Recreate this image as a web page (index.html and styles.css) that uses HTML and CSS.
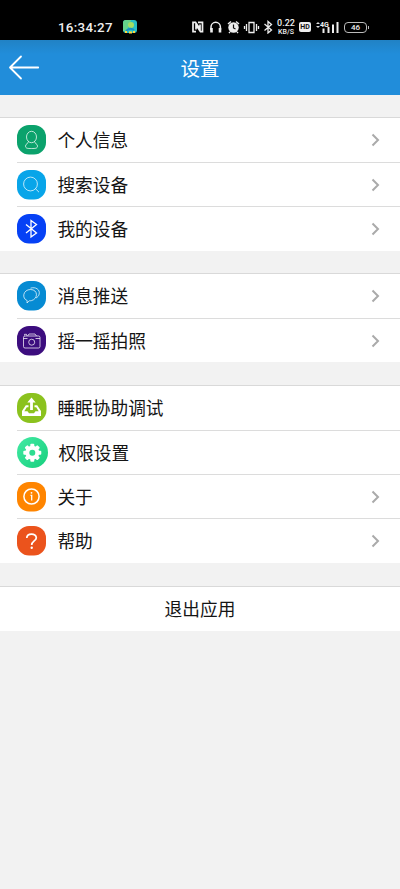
FILE: index.html
```html
<!DOCTYPE html>
<html lang="zh-CN">
<head>
<meta charset="utf-8">
<title>设置</title>
<link rel="stylesheet" href="styles.css">
</head>
<body>
<div class="status">
  <span class="time">16:34:27</span>
  <svg class="app" width="14" height="14" viewBox="0 0 14 14"><rect width="14" height="13" rx="3" fill="#27bfc4"/><path d="M0 3a3 3 0 0 1 3-3h5L6 6l-3 5H0z" fill="#65d58a"/><circle cx="8" cy="5" r="3" fill="#a4df62"/><path d="M3 11q4-4 8-1" stroke="#168fc3" stroke-width="2" fill="none"/><path d="M2 12h2m2 .5h3m1-.5h2" stroke="#ffd83b" stroke-width="2"/></svg>
  <svg class="indicators" width="83" height="14" viewBox="0 0 83 14" fill="none" stroke="#eee" stroke-width="1.5">
    <path d="M4 11.700H1V2.300h2.500L8 9V4.500M6 2.300h4.500v9.400H8.500L4 5v4.500" stroke-width="1.700"/>
    <path d="M19 10V7a4.700 4.700 0 0 1 9.400 0v3"/><path d="M19.500 8v4.500M28 8v4.500" stroke-width="2.600"/>
    <circle cx="41.500" cy="7.500" r="5.200" fill="#eee" stroke="none"/><path d="M36 4l3-2.500M47 4l-3-2.500M38 12l-1 1M45 12l1 1"/><path d="M41.500 4.500v3.500l2 1" stroke="#111" stroke-width="1.200"/>
    <path d="M57 2.500h5v10h-5zM54.500 4v7M64.500 4v7M52.500 6v3M66.500 6v3" stroke-width="1.300"/>
    <path d="M72.500 4l7 6-3.500 3V1.500l3.500 3-7 6" stroke-width="1.300"/>
  </svg>
  <span class="speed"><b>0.22</b><small>KB/S</small></span>
  <span class="hd">HD</span>
  <svg class="signal" width="24" height="14" viewBox="0 0 24 14"><path d="M0 4l2-2 2 2M0 6l2 2 2-2" fill="#ddd"/><text x="4" y="6.500" class="network">4G</text><path d="M7.500 13V8.500M12.500 13V7M17 13V4.500M21.500 13V2" stroke="#eee" stroke-width="2"/></svg>
  <span class="battery">46</span>
</div>
<header class="header">
  <svg width="32" height="26" viewBox="0 0 32 26" fill="none" stroke="#fff" stroke-width="1.800" stroke-linecap="round" stroke-linejoin="round"><path d="M13 1.500L2 12.500l11 11M2.500 12.500h27.700"/></svg>
  <h1>设置</h1><span></span>
</header>
<main>
  <section class="group">
    <div class="row"><svg class="icon" viewBox="0 0 30 30"><rect class="tile green" width="29" height="29.500" rx="12"/><g class="line"><ellipse cx="14.500" cy="12" rx="5" ry="5.700"/><path d="M11.500 16.500c0 2-3 2.200-3 4.500 0 2.500 2 2.500 6 2.500s6 0 6-2.500c0-2.300-3-2.500-3-4.500"/></g></svg><span class="label">个人信息</span><svg class="chevron" viewBox="0 0 9 14"><path d="M1.500 1.500L7 7l-5.500 5.500"/></svg></div>
    <div class="row"><svg class="icon" viewBox="0 0 30 30"><rect class="tile sky" width="29" height="29.500" rx="12"/><g class="line"><circle cx="13.500" cy="14" r="6.900"/><path d="M18.300 18.500l3.700 3.700"/></g></svg><span class="label">搜索设备</span><svg class="chevron" viewBox="0 0 9 14"><path d="M1.500 1.500L7 7l-5.500 5.500"/></svg></div>
    <div class="row"><svg class="icon" viewBox="0 0 30 30"><rect class="tile blue" width="29" height="29.500" rx="12"/><path class="bluetooth" d="M9 10.500l10.500 8.500-5.500 4V6.500l5.500 4L9 19"/></svg><span class="label">我的设备</span><svg class="chevron" viewBox="0 0 9 14"><path d="M1.500 1.500L7 7l-5.500 5.500"/></svg></div>
  </section>
  <section class="group">
    <div class="row"><svg class="icon" viewBox="0 0 30 30"><rect class="tile azure" width="29" height="29.500" rx="12"/><g class="line"><path d="M10 22l.2-2.400C4.500 17.500 6 8.500 13.500 8.500c8 0 7.500 9.500 1 11.100-.8.200-1.500.2-2.200.2z"/><path d="M13.500 7.200c5-1.700 9.700 1.300 8.700 5.800-.4 1.800-1.600 3.200-3.200 4"/></g></svg><span class="label">消息推送</span><svg class="chevron" viewBox="0 0 9 14"><path d="M1.500 1.500L7 7l-5.500 5.500"/></svg></div>
    <div class="row"><svg class="icon" viewBox="0 0 30 30"><rect class="tile purple" width="29" height="29.500" rx="12"/><g class="line"><rect x="6.500" y="10" width="16.500" height="12" rx="1.500"/><path d="M10.500 10l1.500-2h6l1.500 2M7.500 9.500V8.300h2v1.200M6.500 12.500h4M18.500 12.500H23"/><circle cx="14.700" cy="16.200" r="3"/></g></svg><span class="label">摇一摇拍照</span><svg class="chevron" viewBox="0 0 9 14"><path d="M1.500 1.500L7 7l-5.500 5.500"/></svg></div>
  </section>
  <section class="group last">
    <div class="row"><svg class="icon" viewBox="0 0 30 30"><rect class="tile lime" width="29.500" height="30" rx="13"/><path d="M14.500 4.500L10.300 9.500h2.800v7.500h2.800V9.500h2.800z" fill="#fff"/><path d="M11.500 12.200H8.800L5 18v5h19v-5l-3.800-5.800h-2.700v2h1.700l2.500 4h-3.200L17 20.300h-5l-1.500-2.100H7.300l2.500-4h1.700z" fill="#fff"/></svg><span class="label">睡眠协助调试</span></div>
    <div class="row permission"><svg class="icon" viewBox="0 0 31 31"><defs><linearGradient id="mint" x2="1" y2="1"><stop stop-color="#43eaa4"/><stop offset="1" stop-color="#16cf7d"/></linearGradient></defs><circle cx="15.500" cy="15.500" r="15.500" fill="url(#mint)"/><g transform="translate(15.300 15.700)" fill="#fff"><g id="teeth"><rect x="-2" y="-9" width="4" height="18" rx="1"/><rect x="-9" y="-2" width="18" height="4" rx="1"/></g><use href="#teeth" transform="rotate(45)"/><circle r="7"/><circle r="3" fill="#2cdd90"/></g></svg><span class="label">权限设置</span></div>
    <div class="row"><svg class="icon" viewBox="0 0 30 30"><rect class="tile orange" width="29" height="29.500" rx="12"/><circle cx="14.500" cy="14.500" r="7.600" fill="none" stroke="#fff" stroke-width="1.500"/><circle cx="14.500" cy="10.800" r=".9" fill="#fff"/><path d="M13.500 13.300h1.200v5.200" fill="none" stroke="#fff" stroke-width="1.300"/></svg><span class="label">关于</span><svg class="chevron" viewBox="0 0 9 14"><path d="M1.500 1.500L7 7l-5.500 5.500"/></svg></div>
    <div class="row"><svg class="icon" viewBox="0 0 30 30"><rect class="tile red" width="29" height="29.500" rx="12"/><path d="M9.800 12c0-5.200 9.500-5.200 9.500-.3 0 3.300-4.600 3.200-4.600 7.300" fill="none" stroke="#fff" stroke-width="1.700"/><circle cx="14.700" cy="21.800" r="1.200" fill="#fff"/></svg><span class="label">帮助</span><svg class="chevron" viewBox="0 0 9 14"><path d="M1.500 1.500L7 7l-5.500 5.500"/></svg></div>
  </section>
  <button class="exit">退出应用</button>
</main>
</body>
</html>
```
FILE: styles.css
```css
* { box-sizing: border-box; }
body { margin: 0; min-height: 889px; background: #f2f2f2; color: #151515; font-family: Roboto, "Noto Sans CJK SC", sans-serif; }
.status { height: 40px; padding: 14px 0 0 58px; background: #000; color: #eee; display: flex; align-items: center; }
.time { width: 65px; font: 500 13.3px Roboto, sans-serif; letter-spacing: .3px; white-space: nowrap; }
.app { flex: none; }
.indicators { flex: none; margin-left: 55px; }
.speed { flex: none; width: 20px; margin-left: 1px; display: flex; flex-direction: column; align-items: center; }
.speed b { font: 500 9px/9px Roboto, sans-serif; }
.speed small { font: 500 7px/8px Roboto, sans-serif; }
.hd { flex: none; margin-left: 3px; width: 12px; height: 10px; border-radius: 2px; background: #eee; color: #111; font: bold 7px/10px Roboto, sans-serif; text-align: center; }
.signal { flex: none; margin-left: 5px; }
.network { font: bold 7px Roboto, sans-serif; fill: #eee; }
.battery { flex: none; position: relative; width: 23px; height: 11px; margin-left: 4px; border: 1px solid #bbb; border-radius: 4px; font: 500 8px/9px Roboto, sans-serif; text-align: center; }
.battery::after { content: ""; position: absolute; right: -3px; top: 3px; width: 1px; height: 3px; background: #bbb; }
.header { height: 55px; padding: 0 8px; background: linear-gradient(#2182c5, #218dda 14px, #218dda); display: grid; grid-template-columns: 32px 1fr 32px; align-items: center; }
.header h1 { margin: 4px 0 0; color: #fff; font-size: 19.5px; font-weight: 400; text-align: center; line-height: 28px; }
main { padding-top: 22px; }
.group { margin-bottom: 22.300px; padding-left: 17px; background: #fff; border-top: 1px solid #d9d9d9; }
.group.last { margin-bottom: 23px; }
.row { height: 44.330px; padding-right: 20px; display: flex; align-items: center; }
.group + .group .row { padding-top: 1px; }
.row:first-child { height: 44px; }
.row + .row { border-top: 1px solid #dcdcdc; }
.icon { width: 30px; height: 30px; flex: none; }
.label { margin: 2px 0 0 10.400px; flex: 1; font-size: 17.700px; line-height: 26px; }
.permission .icon { width: 31px; height: 31px; }
.chevron { width: 9px; height: 14px; fill: none; stroke: #aaa; stroke-width: 2; }
.line { fill: none; stroke: #fff; stroke-opacity: .8; stroke-width: .9; }
.bluetooth { fill: none; stroke: #fff; stroke-width: 1.300; }
.green { fill: #0ba26c; }
.sky { fill: #08a5e9; }
.blue { fill: #0641f5; }
.azure { fill: #068bd3; }
.purple { fill: #3c0d7e; }
.lime { fill: #8bc21e; }
.orange { fill: #ff8500; }
.red { fill: #eb531c; }
.exit { width: 100%; height: 45px; display: block; padding: 3px 0 0; border: 0; border-top: 1px solid #d9d9d9; background: #fff; color: #151515; font: 400 17.700px/26px Roboto, "Noto Sans CJK SC", sans-serif; }
```
